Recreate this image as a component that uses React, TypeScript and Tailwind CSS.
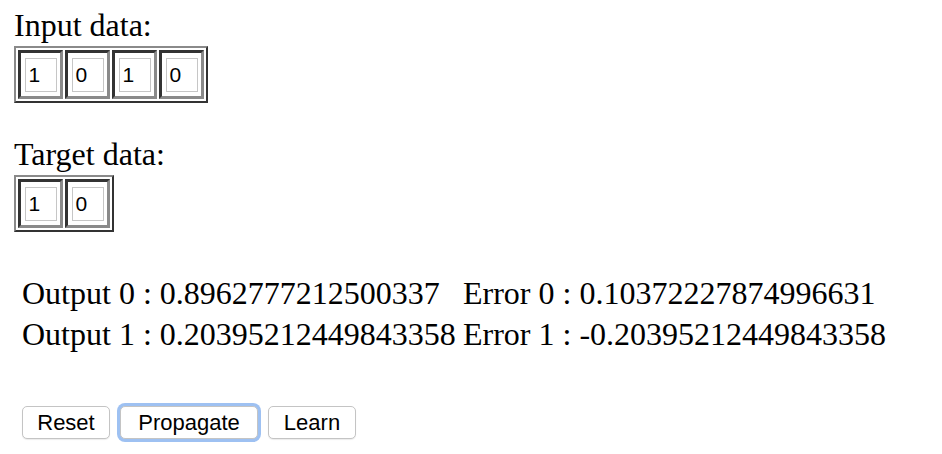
const inputData = ["1", "0", "1", "0"];
const targetData = ["1", "0"];

const outputs = [
  { output: "0.8962777212500337", error: "0.10372227874996631" },
  { output: "0.20395212449843358", error: "-0.20395212449843358" },
];

function DataCells({ values }: { values: string[] }) {
  return (
    <div className="inline-flex gap-[2px] p-[2px] border-2 border-t-[#8a8a8a] border-l-[#8a8a8a] border-b-[#333333] border-r-[#333333] bg-white">
      {values.map((v, i) => (
        <div
          key={i}
          className="w-[45px] h-[49px] flex items-center justify-center border-[3px] border-t-[#333333] border-l-[#333333] border-b-[#8a8a8a] border-r-[#8a8a8a]"
        >
          <div className="w-[32px] h-[34px] border border-[#c6c6c6] flex items-center pl-[3px] font-['Liberation_Sans',Arial,sans-serif] text-[21px] leading-none text-black">
            {v}
          </div>
        </div>
      ))}
    </div>
  );
}

export default function App() {
  return (
    <div className="min-h-screen bg-white px-[14px] pt-[8px] font-['Liberation_Serif','Times_New_Roman',serif] text-[32px] leading-[34px] text-black">
      <div>Input data:</div>
      <div className="mt-[4px] leading-none">
        <DataCells values={inputData} />
      </div>

      <div className="mt-[34px]">Target data:</div>
      <div className="mt-[4px] leading-none">
        <DataCells values={targetData} />
      </div>

      <div className="mt-[44px] ml-[8px] space-y-[7px]">
        {outputs.map((row, i) => (
          <div key={i} className="flex whitespace-nowrap">
            <span className="w-[441px]">Output {i} : {row.output}</span>
            <span>Error {i} : {row.error}</span>
          </div>
        ))}
      </div>

      <div className="mt-[55px] ml-[8px] flex gap-[10px] font-['Liberation_Sans',Arial,sans-serif] text-[22px] leading-none">
        <button className="h-[33px] w-[88px] rounded-[5px] border border-[#c4c4c4] bg-white shadow-[0_1px_1px_rgba(0,0,0,0.08)]">
          Reset
        </button>
        <button className="h-[33px] w-[138px] rounded-[5px] border border-[#c4c4c4] bg-white ring-[3px] ring-[#9ec1f2]">
          Propagate
        </button>
        <button className="h-[33px] w-[88px] rounded-[5px] border border-[#c4c4c4] bg-white shadow-[0_1px_1px_rgba(0,0,0,0.08)]">
          Learn
        </button>
      </div>
    </div>
  );
}
